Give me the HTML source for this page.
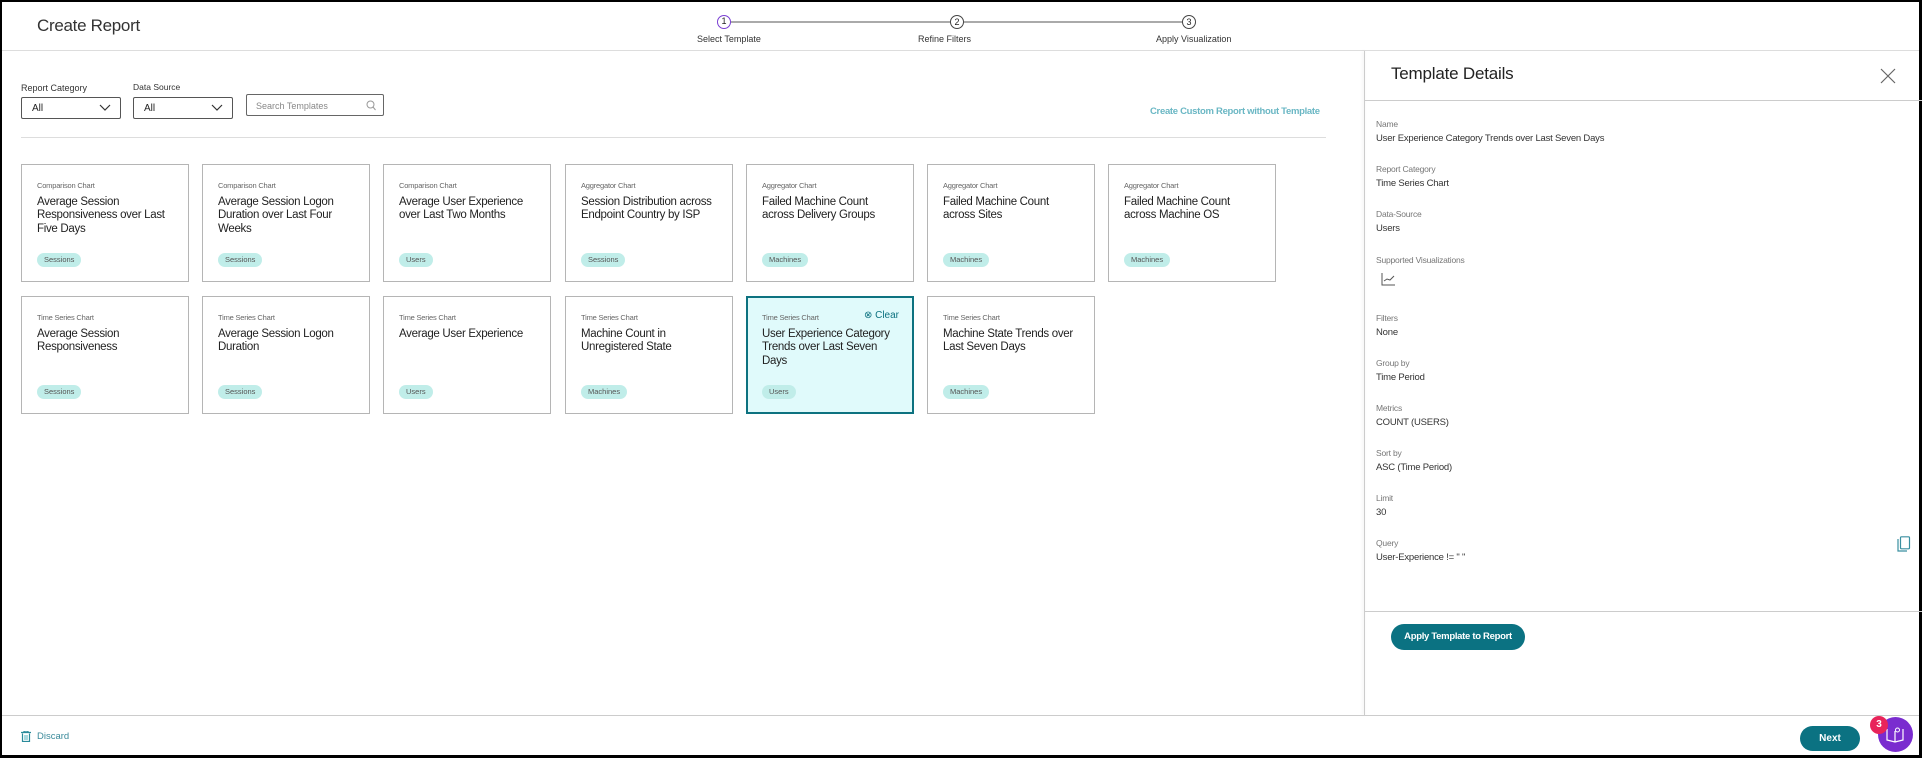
<!DOCTYPE html>
<html><head><meta charset="utf-8"><style>
*{box-sizing:border-box;margin:0;padding:0}
html,body{width:1922px;height:758px;overflow:hidden;background:#000}
#f{position:absolute;left:2px;top:2px;width:1917px;height:753px;background:#fff;font-family:"Liberation Sans",sans-serif;color:#222}
.a{position:absolute;white-space:nowrap}
.card{position:absolute;width:168px;height:118px;border:1px solid #b5b5b5;background:#fff}
.card .t{position:absolute;left:15px;top:16px;font-size:7.5px;color:#666;letter-spacing:-0.2px}
.card .h{position:absolute;left:15px;top:31px;font-size:11.5px;line-height:13.4px;color:#222;letter-spacing:-0.3px;white-space:nowrap}
.card .g{position:absolute;left:15px;top:88px;height:14px;border-radius:7px;background:#c0ede9;font-size:7.5px;color:#555;line-height:14px;padding:0 7px}
.sel{background:#e0fafb;border:2px solid #0d7280}
.lab{position:absolute;left:1374px;font-size:8.5px;color:#777;letter-spacing:-0.2px}
.val{position:absolute;left:1374px;font-size:9.5px;color:#333;letter-spacing:-0.2px}
.sb{position:absolute;height:22px;border:1px solid #555;border-radius:2px;font-size:10px;padding:5px 10px}
</style></head><body><div id="f">
<!-- header -->
<div class="a" style="left:35px;top:14px;font-size:17px;color:#333;letter-spacing:-0.3px">Create Report</div>
<div class="a" style="left:729px;top:19px;width:228px;height:2px;background:#aaa"></div>
<div class="a" style="left:962px;top:19px;width:228px;height:2px;background:#aaa"></div>
<div class="a" style="left:715px;top:13px;width:14px;height:14px;border:1.5px solid #7a3fd3;border-radius:50%;background:#fff;font-size:9px;text-align:center;line-height:11px">1</div>
<div class="a" style="left:948px;top:13px;width:14px;height:14px;border:1px solid #444;border-radius:50%;background:#fff;font-size:9px;text-align:center;line-height:12px">2</div>
<div class="a" style="left:1180px;top:13px;width:14px;height:14px;border:1px solid #444;border-radius:50%;background:#fff;font-size:9px;text-align:center;line-height:12px">3</div>
<div class="a" style="left:695px;top:32px;font-size:9px;color:#333">Select Template</div>
<div class="a" style="left:916px;top:32px;font-size:9px;color:#333">Refine Filters</div>
<div class="a" style="left:1154px;top:32px;font-size:9px;color:#333">Apply Visualization</div>
<div class="a" style="left:0;top:48px;width:1917px;height:1px;background:#ddd"></div>
<!-- filters -->
<div class="a" style="left:19px;top:81px;font-size:9px;color:#333">Report Category</div>
<div class="a" style="left:131px;top:80px;font-size:8.5px;color:#333">Data Source</div>
<div class="sb" style="left:19px;top:95px;width:100px">All<svg style="position:absolute;right:9px;top:6px" width="12" height="8"><path d="M1 1l5 5 5-5" fill="none" stroke="#333" stroke-width="1.2"/></svg></div>
<div class="sb" style="left:131px;top:95px;width:100px">All<svg style="position:absolute;right:9px;top:6px" width="12" height="8"><path d="M1 1l5 5 5-5" fill="none" stroke="#333" stroke-width="1.2"/></svg></div>
<div class="sb" style="left:244px;top:92px;width:138px;border-color:#666;color:#888;font-size:9px;padding:6px 9px">Search Templates<svg style="position:absolute;right:7px;top:5px" width="10" height="11"><circle cx="4.5" cy="4.5" r="3.5" fill="none" stroke="#999"/><path d="M7 7l2.5 3" stroke="#999"/></svg></div>
<div class="a" style="left:1148px;top:104px;font-size:9.5px;color:#6ab7c4;font-weight:bold;letter-spacing:-0.3px">Create Custom Report without Template</div>
<div class="a" style="left:19px;top:135px;width:1305px;height:1px;background:#ddd"></div>
<!-- cards row1 -->
<div class="card" style="left:19px;top:162px"><div class="t">Comparison Chart</div><div class="h">Average Session<br>Responsiveness over Last<br>Five Days</div><div class="g">Sessions</div></div>
<div class="card" style="left:200px;top:162px"><div class="t">Comparison Chart</div><div class="h">Average Session Logon<br>Duration over Last Four<br>Weeks</div><div class="g">Sessions</div></div>
<div class="card" style="left:381px;top:162px"><div class="t">Comparison Chart</div><div class="h">Average User Experience<br>over Last Two Months</div><div class="g">Users</div></div>
<div class="card" style="left:563px;top:162px"><div class="t">Aggregator Chart</div><div class="h">Session Distribution across<br>Endpoint Country by ISP</div><div class="g">Sessions</div></div>
<div class="card" style="left:744px;top:162px"><div class="t">Aggregator Chart</div><div class="h">Failed Machine Count<br>across Delivery Groups</div><div class="g">Machines</div></div>
<div class="card" style="left:925px;top:162px"><div class="t">Aggregator Chart</div><div class="h">Failed Machine Count<br>across Sites</div><div class="g">Machines</div></div>
<div class="card" style="left:1106px;top:162px"><div class="t">Aggregator Chart</div><div class="h">Failed Machine Count<br>across Machine OS</div><div class="g">Machines</div></div>
<!-- row2 -->
<div class="card" style="left:19px;top:294px"><div class="t">Time Series Chart</div><div class="h">Average Session<br>Responsiveness</div><div class="g">Sessions</div></div>
<div class="card" style="left:200px;top:294px"><div class="t">Time Series Chart</div><div class="h">Average Session Logon<br>Duration</div><div class="g">Sessions</div></div>
<div class="card" style="left:381px;top:294px"><div class="t">Time Series Chart</div><div class="h">Average User Experience</div><div class="g">Users</div></div>
<div class="card" style="left:563px;top:294px"><div class="t">Time Series Chart</div><div class="h">Machine Count in<br>Unregistered State</div><div class="g">Machines</div></div>
<div class="card sel" style="left:744px;top:294px"><div class="t" style="left:14px;top:15px">Time Series Chart</div><div class="a" style="right:13px;top:12px;font-size:10px;color:#0d7280">&#8855; Clear</div><div class="h" style="left:14px;top:30px">User Experience Category<br>Trends over Last Seven<br>Days</div><div class="g" style="left:14px;top:87px">Users</div></div>
<div class="card" style="left:925px;top:294px"><div class="t">Time Series Chart</div><div class="h">Machine State Trends over<br>Last Seven Days</div><div class="g">Machines</div></div>
<!-- right panel -->
<div class="a" style="left:1362px;top:49px;width:1px;height:664px;background:#ccc;box-shadow:-1px 0 3px rgba(0,0,0,.12)"></div>
<div class="a" style="left:1389px;top:62px;font-size:17px;color:#222;letter-spacing:-0.2px">Template Details</div>
<svg class="a" style="left:1878px;top:66px" width="16" height="16"><path d="M1 1l14 14M15 1L1 15" stroke="#666" stroke-width="1.2"/></svg>
<div class="a" style="left:1363px;top:98px;width:1554px;height:1px;background:#ccc"></div>
<div class="lab" style="top:117px">Name</div><div class="val" style="top:131px">User Experience Category Trends over Last Seven Days</div>
<div class="lab" style="top:162px">Report Category</div><div class="val" style="top:176px">Time Series Chart</div>
<div class="lab" style="top:207px">Data-Source</div><div class="val" style="top:221px">Users</div>
<div class="lab" style="top:253px">Supported Visualizations</div>
<svg class="a" style="left:1379px;top:271px" width="14" height="13"><path d="M1 0v12h13M3 8l3-2 3 1 4-4" fill="none" stroke="#555" stroke-width="1"/></svg>
<div class="lab" style="top:311px">Filters</div><div class="val" style="top:325px">None</div>
<div class="lab" style="top:356px">Group by</div><div class="val" style="top:370px">Time Period</div>
<div class="lab" style="top:401px">Metrics</div><div class="val" style="top:415px">COUNT (USERS)</div>
<div class="lab" style="top:446px">Sort by</div><div class="val" style="top:460px">ASC (Time Period)</div>
<div class="lab" style="top:491px">Limit</div><div class="val" style="top:505px">30</div>
<div class="lab" style="top:536px">Query</div><div class="val" style="top:550px">User-Experience != " "</div>
<svg class="a" style="left:1895px;top:534px" width="14" height="16"><path d="M1 3v12h9" fill="none" stroke="#3a8fa0" stroke-width="1.2"/><rect x="3.5" y="0.8" width="9" height="12" rx="1" fill="none" stroke="#3a8fa0" stroke-width="1.2"/></svg>
<div class="a" style="left:1363px;top:609px;width:1554px;height:1px;background:#ccc"></div>
<div class="a" style="left:1389px;top:622px;width:134px;height:26px;border-radius:13px;background:#0b7282;color:#fff;font-size:9.5px;font-weight:bold;text-align:center;line-height:26px;letter-spacing:-0.3px">Apply Template to Report</div>
<!-- footer -->
<div class="a" style="left:0;top:713px;width:1917px;height:1px;background:#ccc"></div>
<svg class="a" style="left:19px;top:729px" width="10" height="11"><path d="M0 1.5h10M3 1.5V0h4v1.5M1.5 2.5v8h7v-8" fill="none" stroke="#2a8a9a" stroke-width="1.2"/><rect x="3" y="4" width="4" height="5" fill="#a8d8de"/></svg>
<div class="a" style="left:35px;top:729px;font-size:9.5px;color:#3a8a9a">Discard</div>
<div class="a" style="left:1798px;top:724px;width:60px;height:25px;border-radius:13px;background:#0b7282;color:#fff;font-size:10px;font-weight:bold;text-align:center;line-height:25px">Next</div>
<div class="a" style="left:1876px;top:715px;width:35px;height:35px;border-radius:50%;background:#7a2ccf"></div>
<svg class="a" style="left:1884px;top:724px" width="18" height="17"><path d="M1 3v11l8 2 8-2V3M9 5v11" fill="none" stroke="#fff" stroke-width="1.2"/><circle cx="11.5" cy="4" r="2" fill="none" stroke="#fff"/></svg>
<div class="a" style="left:1868px;top:714px;width:18px;height:18px;border-radius:50%;background:#e8245a;color:#fff;font-size:10px;font-weight:bold;text-align:center;line-height:18px">3</div>
</div></body></html>
